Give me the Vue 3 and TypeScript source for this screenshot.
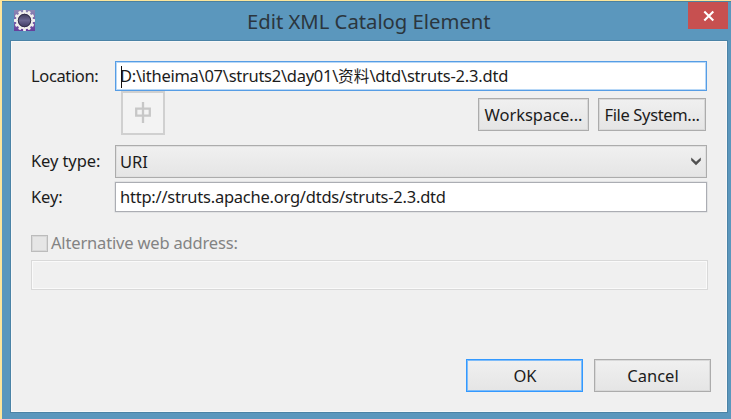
<script setup lang="ts">
import { ref } from 'vue'

const location = ref<string[]>(['D:\\itheima\\07\\struts2\\day01\\', '资料', '\\dtd\\struts-2.3.dtd'])
const keyType = ref<string>('URI')
const key = ref<string>('http://struts.apache.org/dtds/struts-2.3.dtd')
const teeth: number[] = Array.from({ length: 12 }, (_, i) => i * 30)
</script>

<template>
  <main class="window">
    <header class="titlebar">
      <svg class="app-icon" viewBox="0 0 21 21">
        <defs>
          <linearGradient id="tile" x1="0" y1="0" x2="0" y2="1">
            <stop offset="0" stop-color="#8c87b4" />
            <stop offset="1" stop-color="#653f9c" />
          </linearGradient>
          <linearGradient id="core" x1="0" y1="0" x2="0" y2="1">
            <stop offset="0" stop-color="#3a3752" />
            <stop offset=".5" stop-color="#6a6690" />
            <stop offset="1" stop-color="#37315a" />
          </linearGradient>
        </defs>
        <rect width="21" height="21" fill="url(#tile)" />
        <rect v-for="a in teeth" :key="a" x="9.1" y="0" width="2.8" height="4" rx=".6" fill="#f2f0ee" :transform="`rotate(${a} 10.5 10.5)`" />
        <circle cx="10.5" cy="10.5" r="7.7" fill="url(#core)" stroke="#efedeb" stroke-width="2" />
        <circle cx="10.5" cy="10.5" r="6.2" fill="none" stroke="#34304a" stroke-width="1" />
      </svg>
      <h1 class="title">Edit XML Catalog Element</h1>
      <button class="close" aria-label="Close">
        <svg viewBox="0 0 12 12"><path d="M1.3 1.6 10.3 10.4M10.3 1.6 1.3 10.4" stroke="#fff" stroke-width="2.1" /></svg>
      </button>
    </header>
    <section class="panel">
      <div class="row location-row">
        <label class="t-location">Location:</label>
        <div class="field focused"><span class="t-path">{{ location[0] }}</span><span class="cjk">{{ location[1] }}</span><span class="t-file">{{ location[2] }}</span><i class="caret"></i></div>
      </div>
      <div class="row tools">
        <div class="ime">
          <svg viewBox="0 0 16 22"><path d="M1.2 6.7h13.6v7H1.2zM8 0v21" fill="none" stroke="#c7c7c7" stroke-width="2.3" /></svg>
        </div>
        <button class="btn workspace"><span>Workspace...</span></button>
        <button class="btn filesystem"><span>File System...</span></button>
      </div>
      <div class="row type-row">
        <label class="t-type">Key type:</label>
        <div class="combo">
          <span>{{ keyType }}</span>
          <svg viewBox="0 0 10 9"><path d="M.2 .5 5 4.7 9.8 .5V3.5L5 8.2 .2 3.5z" fill="#505050" /></svg>
        </div>
      </div>
      <div class="row key-row">
        <label class="t-key">Key:</label>
        <div class="field"><span class="t-url">{{ key }}</span></div>
      </div>
      <div class="row check-row">
        <i class="check"></i>
        <span class="t-alt">Alternative web address:</span>
      </div>
      <div class="disabled-field"></div>
      <footer class="actions">
        <button class="btn primary"><span>OK</span></button>
        <button class="btn"><span>Cancel</span></button>
      </footer>
    </section>
  </main>
</template>

<style>
body { margin: 0; overflow: hidden; }
</style>

<style scoped>
* { box-sizing: border-box; }
.window {
  width: 731px; height: 419px; padding: 0 4px 7px 9px;
  background: #5b97bd; border-top: 1px solid #fce59b; border-left: 2px solid #ffe59b;
  box-shadow: inset 0 1px #4d819f;
  font-family: "Noto Sans", "Noto Sans CJK SC", sans-serif; font-size: 16.5px; color: #1c1c1c;
}
.titlebar { height: 40px; display: flex; align-items: flex-start; }
.app-icon { width: 21px; height: 21px; margin: 9px 0 0 3px; flex: none; }
.title { flex: 1; margin: 5px 0 0; padding-left: 212px; font-size: 20.3px; font-weight: 400; line-height: 30px; color: #2b363e; white-space: nowrap; letter-spacing: -.02px; }
.close { width: 40px; height: 27px; margin: 1px -1px 0 0; border: 0; padding: 1px 0 0 1px; background: #c75050; display: flex; align-items: center; justify-content: center; flex: none; }
.close svg { width: 12px; height: 12px; }
.panel {
  height: 371px; background: #f0f0f0; padding: 19px 0 0 19px;
  border: 1px solid #f8f8f8; box-shadow: 0 0 0 1px #4b83a6;
}
.row { display: flex; align-items: center; white-space: nowrap; }
label { width: 84px; flex: none; padding-bottom: 2px; }
.t-location { letter-spacing: -.37px; }
.t-type { letter-spacing: -.1px; }
.t-key { letter-spacing: -.1px; }
.t-path { letter-spacing: -.27px; }
.cjk { font-size: 15.7px; }
.t-file { letter-spacing: -.2px; }
.t-url { letter-spacing: -.23px; }
.t-alt { letter-spacing: -.17px; padding-bottom: 2px; }
.location-row { height: 30px; }
.field { position: relative; width: 592px; height: 30px; border: 1px solid #abadb3; background: #fff; padding-left: 4px; line-height: 27px; box-shadow: 0 0 0 .5px #d4d5d8; }
.focused { border-color: #569de5; box-shadow: inset 0 0 0 1px #b8d8f7; }
.caret { position: absolute; left: 5px; top: 4px; width: 1px; height: 22px; background: #111; }
.tools { height: 54px; align-items: flex-start; }
.ime { width: 44px; height: 44px; margin-left: 90px; border: 2px solid #d0d0d0; background: #f3f3f3; display: flex; align-items: center; justify-content: center; flex: none; }
.ime svg { width: 16px; height: 22px; }
.btn { height: 33px; width: 117px; padding: 0 0 0 1px; font: inherit; color: inherit; line-height: 30px; border: 1px solid #acacac; box-shadow: inset 0 0 0 1px #d9d9d9; background: linear-gradient(#f0f0f0, #e5e5e5); white-space: nowrap; flex: none; }
.workspace { width: 111px; margin: 7px 0 0 313px; padding: 0; letter-spacing: -.05px; }
.filesystem { width: 108px; margin: 7px 0 0 9px; padding: 0; letter-spacing: -.35px; }
.type-row { height: 33px; }
.combo { width: 592px; height: 33px; border: 1px solid #acacac; box-shadow: inset 0 0 0 1px #e0e0e0; background: linear-gradient(#f0f0f0, #e5e5e5); display: flex; align-items: center; justify-content: space-between; padding: 0 5px 0 4px; }
.combo svg { width: 10px; height: 9px; }
.key-row { height: 30px; margin-top: 4px; }
.check-row { height: 18px; margin-top: 22px; color: #838383; }
.check { width: 17px; height: 17px; border: 1px solid #bcbcbc; background: #e6e6e6; margin-right: 3px; box-shadow: inset 0 0 0 1px #d8d8d8; }
.disabled-field { width: 677px; height: 30px; margin-top: 8px; border: 1px solid #d9d9d9; box-shadow: inset 0 0 0 1px #fafafa; }
.actions { display: flex; justify-content: flex-end; gap: 11px; margin-top: 69px; padding-right: 15px; }
.primary { border-color: #3399ff; box-shadow: inset 0 0 0 1px #7ebcf9; }
</style>
